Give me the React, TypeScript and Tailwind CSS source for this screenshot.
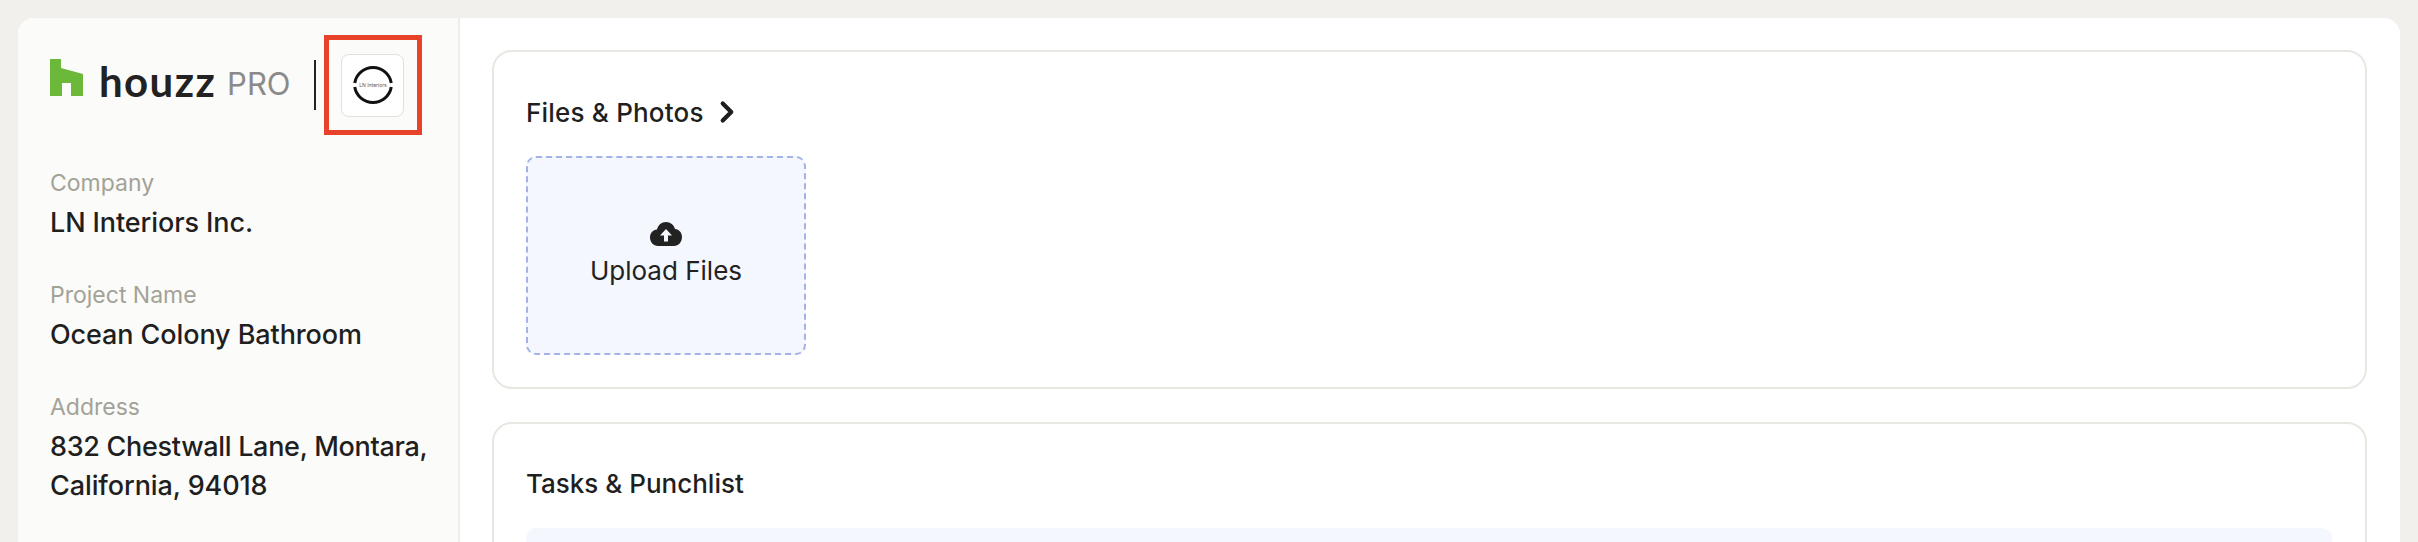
import { ChevronRight } from "lucide-react";

const font = "font-['Inter','Liberation_Sans',sans-serif]";

function Field({ label, children }: { label: string; children: React.ReactNode }) {
  return (
    <div className="mb-[34px]">
      <div className="text-[23px] leading-[39px] text-[#a3a297] h-[39px]">{label}</div>
      <div className="text-[27px] leading-[39px] font-medium text-[#1f1f1f] tracking-[-0.1px]">{children}</div>
    </div>
  );
}

function HouzzLogo() {
  return (
    <div className="flex items-end h-[50px] pb-[12px]">
      <svg width="33" height="37" viewBox="0 0 33 37" className="shrink-0">
        <path d="M0 0H11V9L33 15V37H21V24H12V37H0Z" fill="#6bb83a" />
      </svg>
      <span className="ml-[16px] text-[42px] leading-[30px] font-bold text-[#222222] font-['Lato',sans-serif] tracking-[1.400px]">houzz</span>
      <span className="ml-[11px] text-[31px] leading-[24px] text-[#8a8a8a]">PRO</span>
    </div>
  );
}

function CompanyMark() {
  return (
    <div className="border-[5px] border-[#e8432a] w-[98px] h-[100px] flex items-center justify-center">
      <div className="w-[63px] h-[63px] rounded-lg bg-white border border-[#e0e0dc] flex items-center justify-center">
        <svg width="40" height="40" viewBox="0 0 40 40">
          <path d="M1.750 18A18.500 18.500 0 0 1 38.250 18" fill="none" stroke="#111" strokeWidth="3" />
          <path d="M1.750 22A18.500 18.500 0 0 0 38.250 22" fill="none" stroke="#111" strokeWidth="3" />
          <text x="20" y="22" textAnchor="middle" fontSize="5" fill="#555">LN Interiors</text>
        </svg>
      </div>
    </div>
  );
}

function App() {
  return (
    <div className={`${font} w-[2418px] h-[542px] overflow-hidden bg-[#f1f0ec] pt-[18px] pl-[18px] pr-[18px]`}>
      <div className="flex h-[600px] bg-white rounded-t-[16px] overflow-hidden">
        <aside className="w-[442px] shrink-0 bg-[#fbfbf9] border-r-2 border-[#eeeeea] pl-[32px] pr-[10px]">
          <div className="flex items-center h-[100px] mt-[17px]">
            <div className="-mt-[5px]"><HouzzLogo /></div>
            <div className="ml-[23px] w-[2px] h-[50px] bg-[#222222]" />
            <div className="ml-[8px]"><CompanyMark /></div>
          </div>
          <div className="mt-[29px]">
            <Field label="Company">LN Interiors Inc.</Field>
            <Field label="Project Name">Ocean Colony Bathroom</Field>
            <Field label="Address">
              <span className="tracking-[-0.3px]">832 Chestwall Lane, Montara,</span>
              <br />
              California, 94018
            </Field>
          </div>
        </aside>
        <main className="flex-1 pt-[32px] pl-[32px] pr-[33px]">
          <section className="h-[339px] rounded-[20px] border-2 border-[#e8e8e2] pl-[32px] pt-[42px]">
            <div className="flex items-center h-[36px] text-[26px] font-medium text-[#1f1f1f] tracking-[0.2px]">
              Files &amp; Photos
              <ChevronRight className="ml-[6px] w-[34px] h-[34px]" strokeWidth={3} />
            </div>
            <button className="mt-[26px] w-[280px] h-[199px] rounded-[10px] border-2 border-dashed border-[#a3b3ea] bg-[#f4f7fd] flex flex-col items-center justify-center">
              <svg width="32" height="24" viewBox="0 0 32 24">
                <path d="M16 0C20.500 0 24 3 25 7C29 7.500 32 10.500 32 15C32 20 28.500 24 24 24H8C3.500 24 0 20 0 15.500C0 11 3 8 7 7.500C8 3 11.500 0 16 0Z" fill="#222" />
                <path d="M16 7L22 13.500H18V19.500H14V13.500H10Z" fill="#f4f7fd" />
              </svg>
              <span className="mt-[7px] text-[26px] leading-[36px] text-[#222]">Upload Files</span>
            </button>
          </section>
          <section className="mt-[33px] h-[300px] rounded-[20px] border-2 border-[#e8e8e2] pl-[32px] pr-[33px] pt-[41px]">
            <div className="flex items-center h-[36px] text-[26px] font-medium text-[#1f1f1f]">Tasks &amp; Punchlist</div>
            <div className="mt-[27px] h-[100px] rounded-[10px] bg-[#f4f7fd]" />
          </section>
        </main>
      </div>
    </div>
  );
}

export default App;
